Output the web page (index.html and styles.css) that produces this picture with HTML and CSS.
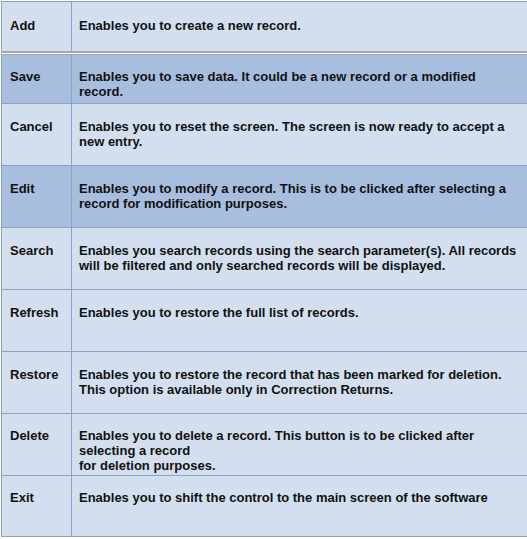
FILE: index.html
```html
<!DOCTYPE html>
<html>
<head>
<meta charset="utf-8">
<link rel="stylesheet" href="styles.css">
</head>
<body>
<div class="page">
  <div class="table top">
    <div class="row short light"><div class="key">Add</div><div class="desc">Enables you to create a new record.</div></div>
  </div>
  <div class="sep"></div>
  <div class="table main">
    <div class="row short dark tight"><div class="key">Save</div><div class="desc">Enables you to save data. It could be a new record or a modified record.</div></div>
    <div class="row light"><div class="key">Cancel</div><div class="desc">Enables you to reset the screen. The screen is now ready to accept a new entry.</div></div>
    <div class="row dark"><div class="key">Edit</div><div class="desc">Enables you to modify a record. This is to be clicked after selecting a record for modification purposes.</div></div>
    <div class="row light"><div class="key">Search</div><div class="desc">Enables you search records using the search parameter(s). All records will be filtered and only searched records will be displayed.</div></div>
    <div class="row light"><div class="key">Refresh</div><div class="desc">Enables you to restore the full list of records.</div></div>
    <div class="row light"><div class="key">Restore</div><div class="desc">Enables you to restore the record that has been marked for deletion. This option is available only in Correction Returns.</div></div>
    <div class="row light tight"><div class="key">Delete</div><div class="desc">Enables you to delete a record. This button is to be clicked after<br>selecting a record<br>for deletion purposes.</div></div>
    <div class="row light last tight"><div class="key">Exit</div><div class="desc">Enables you to shift the control to the main screen of the software</div></div>
  </div>
</div>
</body>
</html>
```

FILE: styles.css
```css
html, body {
  margin: 0;
  padding: 0;
  background: #ffffff;
}
.page {
  padding: 1px 0 0 1px;
  font-family: "Liberation Sans", Arial, sans-serif;
  font-weight: bold;
  font-size: 13px;
  line-height: 15px;
  color: #111111;
}
.table {
  border-left: 1px solid #8aa3c4;
}
.top {
  border-top: 1px solid #8f9fb4;
}
.sep {
  height: 4px;
  border-top: 2px solid #a2a6ab;
  border-bottom: 1px solid #a2a6ab;
  box-sizing: border-box;
  background: #ffffff;
}
.row {
  display: flex;
  height: 62px;
  box-sizing: border-box;
  border-bottom: 1px solid #8aa3c4;
}
.row.short {
  height: 49px;
}
.top .row {
  border-bottom: none;
}
.row.last {
  height: 61px;
  border-bottom: 1px solid #8f9fb4;
}
.light {
  background: #d3dfee;
}
.dark {
  background: #a8bedf;
}
.key {
  width: 70px;
  flex: none;
  box-sizing: border-box;
  padding: 15px 0 0 8px;
  border-right: 1px solid #8aa3c4;
}
.desc {
  flex: 1;
  padding: 15px 8px 0 7px;
}
.tight .key, .tight .desc {
  padding-top: 14px;
}
.top .key, .top .desc {
  padding-top: 16px;
}
```
